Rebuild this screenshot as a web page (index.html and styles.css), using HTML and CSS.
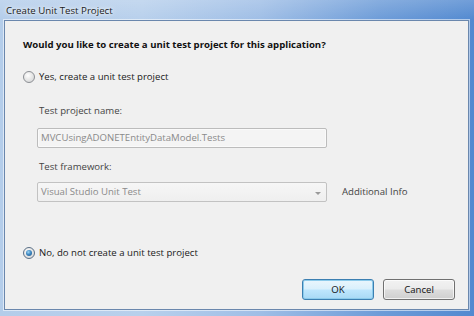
FILE: index.html
```html
<!DOCTYPE html>
<html>
<head>
<meta charset="utf-8">
<link rel="stylesheet" href="styles.css">
</head>
<body>
<div class="window">
  <div class="titlebar"><span class="title">Create Unit Test Project</span></div>
  <div class="client">
    <div class="heading">Would you like to create a unit test project for this application?</div>
    <div class="radio-row row-yes">
      <span class="radio"></span>
      <span class="radio-label">Yes, create a unit test project</span>
    </div>
    <div class="sub">
      <div class="label label-name">Test project name:</div>
      <div class="textbox">MVCUsingADONETEntityDataModel.Tests</div>
      <div class="label label-fw">Test framework:</div>
      <div class="combo-row">
        <div class="combo">
          <span class="combo-text">Visual Studio Unit Test</span>
          <span class="arrow"></span>
        </div>
        <span class="info">Additional Info</span>
      </div>
    </div>
    <div class="radio-row row-no">
      <span class="radio checked"><span class="dot"></span></span>
      <span class="radio-label">No, do not create a unit test project</span>
    </div>
    <div class="buttons">
      <button class="btn btn-default">OK</button>
      <button class="btn">Cancel</button>
    </div>
  </div>
</div>
</body>
</html>
```

FILE: styles.css
```css
html, body {
  margin: 0;
  padding: 0;
}
body {
  width: 474px;
  height: 316px;
  overflow: hidden;
  font-family: "Open Sans", "Noto Sans", sans-serif;
}
.window {
  box-sizing: border-box;
  width: 474px;
  height: 316px;
  display: flex;
  flex-direction: column;
  padding: 0 5px 6px 4px;
  background:
    linear-gradient(to bottom, rgba(255,255,255,0.18) 0px, rgba(255,255,255,0) 20px),
    linear-gradient(to right, #b4cdea 0%, #b8d0ec 30%, #9fbee6 55%, #6d9cd8 80%, #5289d0 100%);
}
.titlebar {
  height: 20px;
  display: flex;
  align-items: center;
  padding-left: 2px;
}
.title {
  font-size: 9.7px;
  color: #1b1b1b;
  text-shadow: 0 0 6px #ffffff, 0 0 3px #ffffff;
}
.client {
  flex: 1;
  display: flex;
  flex-direction: column;
  background: #f0f0f0;
  border: 1px solid #6a87ad;
  box-shadow: 0 0 0 1px rgba(255,255,255,0.55);
  padding: 17px 13px 0 18px;
  font-size: 9.6px;
  line-height: 14px;
  color: #1a1a1a;
}
.heading {
  font-weight: 700;
  font-size: 9.6px;
  height: 14px;
  white-space: nowrap;
  color: #111;
}
.radio-row {
  display: flex;
  align-items: center;
  height: 14px;
  gap: 4px;
}
.row-yes {
  margin-top: 18px;
}
.row-no {
  margin-top: 44px;
}
.radio {
  box-sizing: border-box;
  width: 12px;
  height: 12px;
  border-radius: 50%;
  border: 1px solid #8c8f94;
  background: radial-gradient(circle at 40% 35%, #ffffff 0%, #e8e8e8 45%, #cfd1d3 100%);
  display: flex;
  align-items: center;
  justify-content: center;
}
.radio.checked {
  border-color: #5a6f86;
}
.dot {
  width: 6px;
  height: 6px;
  border-radius: 50%;
  background: radial-gradient(circle at 40% 35%, #9fd7f5 0%, #3e88c2 45%, #1c4f82 100%);
}
.sub {
  margin-left: 14px;
  display: flex;
  flex-direction: column;
}
.label {
  padding-left: 2px;
  height: 14px;
  color: #444;
}
.label-name {
  margin-top: 20px;
}
.label-fw {
  margin-top: 12px;
}
.textbox {
  box-sizing: border-box;
  margin-top: 10px;
  width: 290px;
  height: 20px;
  border: 1px solid #bcbcbc;
  border-radius: 2px;
  background: #f4f4f4;
  box-shadow: inset 0 0 0 1px #fafafa;
  color: #8a8a8a;
  padding: 2px 0 0 3px;
  line-height: 14px;
}
.combo-row {
  margin-top: 8px;
  display: flex;
  align-items: center;
  gap: 15px;
}
.combo {
  box-sizing: border-box;
  width: 290px;
  height: 20px;
  border: 1px solid #c2c2c2;
  border-radius: 2px;
  background: linear-gradient(to bottom, #f6f6f6, #efefef);
  display: flex;
  align-items: center;
  justify-content: space-between;
  padding: 0 5px 0 3px;
  color: #8a8a8a;
}
.arrow {
  width: 0;
  height: 0;
  border-left: 3px solid transparent;
  border-right: 3px solid transparent;
  border-top: 3px solid #9a9a9a;
  margin-top: 2px;
}
.info {
  color: #444;
}
.buttons {
  margin-top: 19px;
  display: flex;
  justify-content: flex-end;
  gap: 9px;
}
.btn {
  box-sizing: border-box;
  width: 72px;
  height: 21px;
  border: 1px solid #707070;
  border-radius: 3px;
  background: linear-gradient(to bottom, #f2f2f2 0%, #ebebeb 48%, #dddddd 52%, #cfcfcf 100%);
  box-shadow: inset 0 0 0 1px rgba(255,255,255,0.7);
  font-family: "Open Sans", "Noto Sans", sans-serif;
  font-size: 9.6px;
  color: #111;
  padding: 0;
}
.btn-default {
  border-color: #3c7fb1;
  background: linear-gradient(to bottom, #eaf6fd 0%, #d9f0fc 48%, #bee6fd 52%, #a7d9f5 100%);
  box-shadow: inset 0 0 0 1px #8ccbeb;
}
```
